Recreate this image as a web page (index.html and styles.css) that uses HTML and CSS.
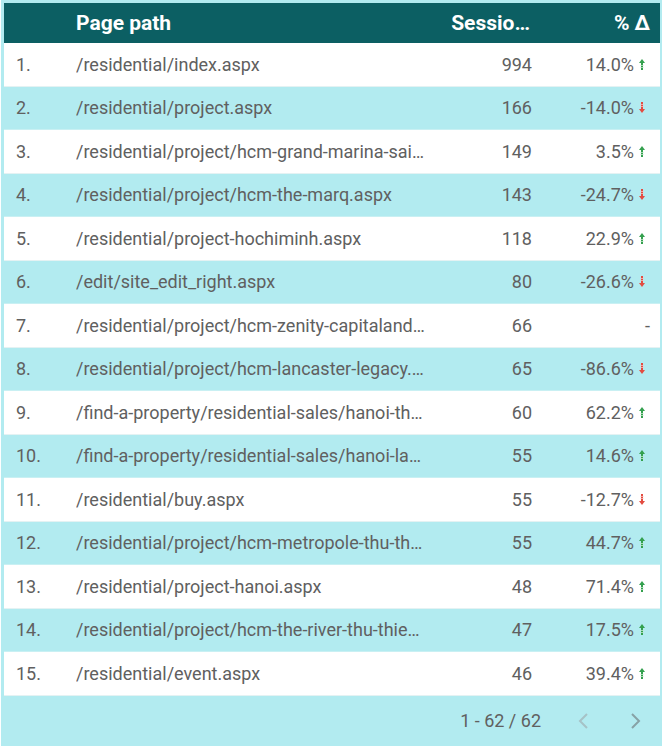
FILE: index.html
```html
<!DOCTYPE html>
<html>
<head>
<meta charset="utf-8">
<link rel="stylesheet" href="styles.css">
</head>
<body>
<div class="widget">
  <div class="row head">
    <div class="c-idx"></div>
    <div class="c-path">Page path</div>
    <div class="c-sess">Sessio…</div>
    <div class="c-chg">% Δ</div>
  </div>
  <div class="body" id="rows"></div>
  <div class="footer">
    <span class="pages">1 - 62 / 62</span>
    <span class="nav prev">
      <svg width="12" height="20" viewBox="0 0 12 20"><path d="M10 3 L3 10 L10 17" fill="none" stroke="#a6c2c6" stroke-width="2"/></svg>
    </span>
    <span class="nav next">
      <svg width="12" height="20" viewBox="0 0 12 20"><path d="M2 3 L9 10 L2 17" fill="none" stroke="#87a2a6" stroke-width="2"/></svg>
    </span>
  </div>
</div>
<script>
var data = [
["/residential/index.aspx","994","14.0%","up"],
["/residential/project.aspx","166","-14.0%","down"],
["/residential/project/hcm-grand-marina-saigon.aspx","149","3.5%","up"],
["/residential/project/hcm-the-marq.aspx","143","-24.7%","down"],
["/residential/project-hochiminh.aspx","118","22.9%","up"],
["/edit/site_edit_right.aspx","80","-26.6%","down"],
["/residential/project/hcm-zenity-capitaland.aspx","66","-",""],
["/residential/project/hcm-lancaster-legacy.aspx","65","-86.6%","down"],
["/find-a-property/residential-sales/hanoi-the-nine.aspx","60","62.2%","up"],
["/find-a-property/residential-sales/hanoi-lancaster.aspx","55","14.6%","up"],
["/residential/buy.aspx","55","-12.7%","down"],
["/residential/project/hcm-metropole-thu-thiem.aspx","55","44.7%","up"],
["/residential/project-hanoi.aspx","48","71.4%","up"],
["/residential/project/hcm-the-river-thu-thiem.aspx","47","17.5%","up"],
["/residential/event.aspx","46","39.4%","up"]
];
var up = '<svg class="arr" width="6" height="11" viewBox="0 0 6 11"><path d="M3 0 L6 4 L4 4 L4 11 L2 11 L2 4 L0 4 Z" fill="#34a04e"/><path d="M1.5 6.5 H4.5 M1.5 8.5 H4.5" stroke="#c4e6cc" stroke-width="0.8"/></svg>';
var down = '<svg class="arr" width="6" height="11" viewBox="0 0 6 11"><path d="M3 11 L6 7 L4 7 L4 0 L2 0 L2 7 L0 7 Z" fill="#e34b40"/><path d="M1.5 2.5 H4.5 M1.5 4.5 H4.5" stroke="#f6c2bd" stroke-width="0.8"/></svg>';
var html = "";
data.forEach(function(d, i){
  html += '<div class="row ' + (i % 2 ? 'alt' : '') + '">' +
    '<div class="c-idx">' + (i+1) + '.</div>' +
    '<div class="c-path">' + d[0] + '</div>' +
    '<div class="c-sess">' + d[1] + '</div>' +
    '<div class="c-chg' + (d[3] ? '' : ' none') + '"><span>' + d[2] + '</span>' + (d[3]=="up" ? up : d[3]=="down" ? down : '') + '</div>' +
    '</div>';
});
document.getElementById("rows").innerHTML = html;
</script>
</body>
</html>
```
FILE: styles.css
```css
html, body {
  margin: 0;
  padding: 0;
  background: #ffffff;
}
body {
  font-family: Roboto, "Liberation Sans", sans-serif;
}
.widget {
  margin-left: 1px;
  width: 656px;
  border-top: 3px solid #b2ebf0;
  border-left: 3px solid #b2ebf0;
  border-right: 2px solid #b2ebf0;
  background: #b2ebf0;
}
.row {
  display: grid;
  grid-template-columns: 72px 353px 103px 128px;
  align-items: center;
  height: 43.5px;
  background: #ffffff;
  color: #606060;
  font-size: 18px;
  font-weight: 400;
  box-sizing: border-box;
  border-bottom: 1px solid #e4f2f3;
}
.row.alt {
  background: #b2ebf0;
  border-bottom-color: #c9f0f3;
}
.row.head {
  height: 40px;
  background: #0c5f63;
  color: #ffffff;
  font-weight: 700;
  font-size: 21px;
  border-bottom: none;
}
.c-idx {
  padding-left: 12px;
}
.c-path {
  white-space: nowrap;
  overflow: hidden;
  text-overflow: ellipsis;
  padding-right: 4px;
}
.c-sess {
  text-align: right;
}
.head .c-sess {
  padding-right: 2px;
}
.c-chg {
  display: flex;
  justify-content: flex-end;
  align-items: center;
  gap: 5px;
  padding-right: 15px;
}
.c-chg.none {
  padding-right: 10px;
}
.head .c-chg {
  padding-right: 10px;
}
.arr {
  display: block;
}
.footer {
  height: 50px;
  display: flex;
  align-items: center;
  justify-content: flex-end;
  color: #606060;
  font-size: 18px;
  font-weight: 400;
}
.pages {
  margin-right: 30px;
}
.nav {
  display: flex;
  width: 24px;
  justify-content: center;
}
.nav.prev {
  margin-right: 29px;
}
.nav.next {
  margin-right: 12px;
}
```
